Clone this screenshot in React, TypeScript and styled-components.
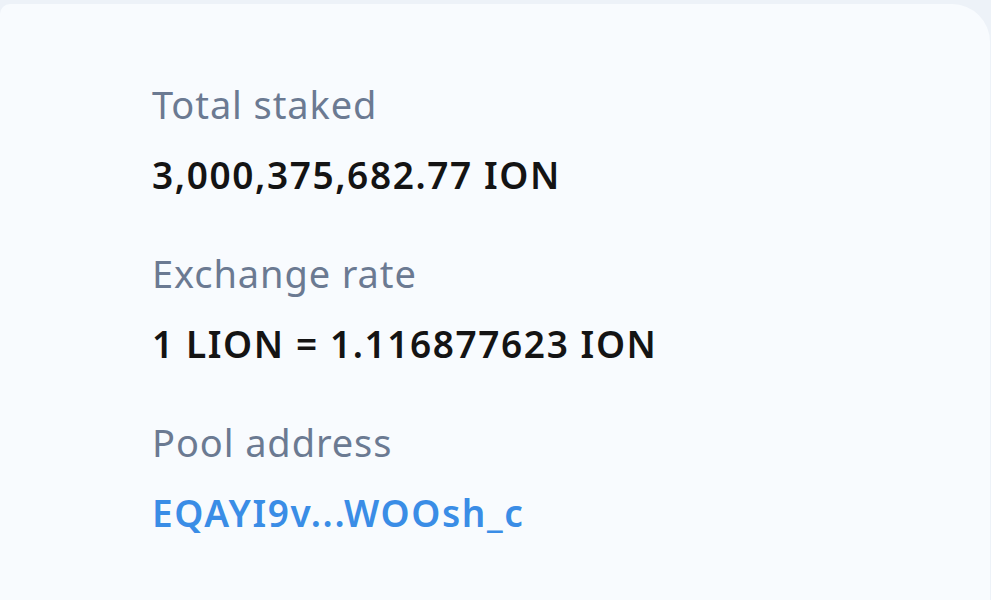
import React from "react";
import styled, { createGlobalStyle } from "styled-components";

const GlobalStyle = createGlobalStyle`
  html, body {
    margin: 0;
    padding: 0;
    background: #edf2f8;
    font-family: "Noto Sans", "Open Sans", sans-serif;
  }
`;

const stats = [
  { label: "Total staked", value: "3,000,375,682.77 ION" },
  { label: "Exchange rate", value: "1 LION = 1.116877623 ION" },
  { label: "Pool address", value: "EQAYI9v...WOOsh_c", link: true },
];

function App() {
  return (
    <>
      <GlobalStyle />
      <Page>
        <Card>
          {stats.map((s) => (
            <Stat key={s.label}>
              <Label>{s.label}</Label>
              <Value $link={s.link}>{s.value}</Value>
            </Stat>
          ))}
        </Card>
      </Page>
    </>
  );
}

const Page = styled.div`
  height: 600px;
  overflow: hidden;
  padding: 4px 1px 0 0;
  box-sizing: border-box;
`;

const Card = styled.div`
  height: 640px;
  background: #f8fbfe;
  border-radius: 10px 38px 0 0;
  padding: 74px 0 0 152px;
  box-sizing: border-box;
  display: flex;
  flex-direction: column;
  gap: 46px;
`;

const Stat = styled.div`
  display: flex;
  flex-direction: column;
  gap: 19px;
`;

const Label = styled.div`
  font-size: 38px;
  line-height: 52px;
  letter-spacing: 0.9px;
  color: #6b7a92;
  font-weight: 400;
`;

const Value = styled.div<{ $link?: boolean }>`
  font-size: 37px;
  line-height: 52px;
  letter-spacing: 1.6px;
  font-weight: 600;
  color: ${(p) => (p.$link ? "#3a8de6" : "#141414")};
`;

export default App;
